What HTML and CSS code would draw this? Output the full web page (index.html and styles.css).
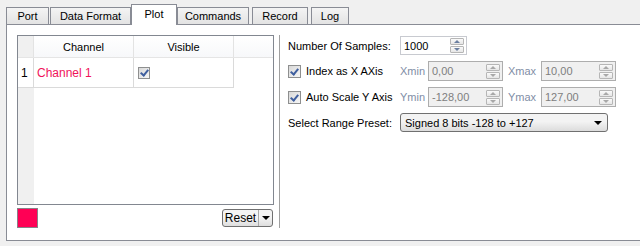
FILE: index.html
```html
<!DOCTYPE html>
<html lang="en">
<head>
    <meta charset="UTF-8">
    <title>Plot Settings</title>
    <link rel="stylesheet" href="styles.css">
</head>
<body>
    <div class="tabs">
        <div class="tab tab-port">Port</div>
        <div class="tab tab-format">Data Format</div>
        <div class="tab tab-plot active">Plot</div>
        <div class="tab tab-commands">Commands</div>
        <div class="tab tab-record">Record</div>
        <div class="tab tab-log">Log</div>
    </div>

    <div class="panel">
        <!-- Channel list -->
        <div class="left">
            <div class="grid">
                <div class="grid-head">
                    <div class="cell corner"></div>
                    <div class="cell head">Channel</div>
                    <div class="cell head">Visible</div>
                    <div class="cell head rest"></div>
                </div>
                <div class="grid-row">
                    <div class="cell num">1</div>
                    <div class="cell name">Channel 1</div>
                    <div class="cell vis"><span class="check small"></span></div>
                </div>
                <div class="grid-fill">
                    <div class="fill-num"></div>
                </div>
            </div>
            <div class="left-bottom">
                <div class="swatch"></div>
                <div class="reset">
                    <span class="reset-label">Reset</span>
                    <span class="reset-arrow"></span>
                </div>
            </div>
        </div>

        <div class="divider"></div>

        <!-- Plot options -->
        <div class="options">
            <div class="label">Number Of Samples:</div>
            <div class="spinbox samples">
                <span class="value">1000</span>
                <span class="spin"><i class="up"></i><i class="down"></i></span>
            </div>

            <label class="checkline"><span class="check"></span>Index as X AXis</label>
            <div class="dim">Xmin</div>
            <div class="spinbox off"><span class="value">0,00</span><span class="spin"><i class="up"></i><i class="down"></i></span></div>
            <div class="dim dim-max">Xmax</div>
            <div class="spinbox off"><span class="value">10,00</span><span class="spin"><i class="up"></i><i class="down"></i></span></div>

            <label class="checkline"><span class="check"></span>Auto Scale Y Axis</label>
            <div class="dim">Ymin</div>
            <div class="spinbox off"><span class="value">-128,00</span><span class="spin"><i class="up"></i><i class="down"></i></span></div>
            <div class="dim dim-max">Ymax</div>
            <div class="spinbox off"><span class="value">127,00</span><span class="spin"><i class="up"></i><i class="down"></i></span></div>

            <div class="label">Select Range Preset:</div>
            <div class="combo">
                <span>Signed 8 bits -128 to +127</span>
                <span class="combo-arrow"></span>
            </div>
        </div>
    </div>
</body>
</html>
```

FILE: styles.css
```css
* {
    margin: 0;
    padding: 0;
    box-sizing: border-box;
}

body {
    font-family: 'Liberation Sans', Arial, sans-serif;
    font-size: 11px;
    color: #000;
    background-color: #f0f0f0;
    width: 640px;
    height: 246px;
    overflow: hidden;
}

/* Tabs */
.tabs {
    display: flex;
    align-items: flex-end;
    height: 24px;
    padding-left: 6px;
}

.tab {
    height: 17px;
    display: flex;
    align-items: center;
    justify-content: center;
    border: 1px solid #898c95;
    border-bottom: none;
    background: linear-gradient(#f4f4f4, #e3e3e3);
    margin-right: 1px;
    padding-bottom: 1px;
}

.tab-port { width: 43px; }
.tab-format { width: 81px; }
.tab-commands { width: 72px; }
.tab-record { width: 56px; margin-left: 2px; }
.tab-log { width: 38px; margin-left: 2px; }

.tab.active {
    width: 46px;
    height: 21px;
    margin: 0 0 -1px -1px;
    background: #fff;
    position: relative;
    z-index: 1;
    padding-bottom: 3px;
}

/* Panel */
.panel {
    margin-left: 6px;
    height: 217px;
    background-color: #fff;
    border: 1px solid #898c95;
    border-right: none;
    display: flex;
    padding: 10px 0 0 10px;
}

.left {
    width: 257px;
    display: flex;
    flex-direction: column;
}

.grid {
    height: 170px;
    border: 1px solid #828790;
    display: flex;
    flex-direction: column;
}

.grid-head {
    display: flex;
    height: 22px;
    border-bottom: 1px solid #e5e5e5;
}

.cell {
    display: flex;
    align-items: center;
    border-right: 1px solid #e3e3e3;
}

.corner {
    width: 16px;
    background-color: #f0f0f0;
}

.head {
    width: 100px;
    justify-content: center;
    background: linear-gradient(#ffffff, #f7f8fa);
    padding-top: 1px;
}

.head.rest {
    flex: 1;
    border-right: none;
}

.grid-row {
    display: flex;
    height: 30px;
}

.grid-row .cell {
    border-bottom: 1px solid #dadada;
    border-right: 1px solid #dadada;
}

.num {
    width: 16px;
    padding-left: 3px;
    font-size: 12px;
}

.name {
    width: 100px;
    padding-left: 3px;
    color: #f0145a;
    font-size: 12px;
}

.vis {
    width: 100px;
    padding-left: 4px;
}

.grid-fill {
    flex: 1;
    display: flex;
}

.fill-num {
    width: 16px;
    background-color: #f0f0f0;
}

.left-bottom {
    display: flex;
    justify-content: space-between;
    align-items: flex-start;
    margin-top: 3px;
}

.swatch {
    width: 21px;
    height: 20px;
    background-color: #ff0055;
    border: 1px solid #8a7f88;
}

.reset {
    display: flex;
    height: 18px;
    margin-top: 1px;
    margin-right: 1px;
    border: 1px solid #707070;
    border-radius: 3px;
    background: linear-gradient(#f4f4f4 45%, #dedede);
}

.reset-label {
    width: 36px;
    display: flex;
    align-items: center;
    justify-content: center;
    border-right: 1px solid #a9a9a9;
    font-size: 12px;
}

.reset-arrow {
    width: 13px;
    position: relative;
}

.reset-arrow::after,
.combo-arrow::after {
    content: "";
    position: absolute;
    left: 50%;
    top: 50%;
    margin: -2px 0 0 -4px;
    border-left: 4px solid transparent;
    border-right: 4px solid transparent;
    border-top: 4px solid #000;
}

.divider {
    width: 1px;
    height: 193px;
    margin-left: 5px;
    background-color: #a0a0a0;
}

/* Options */
.options {
    margin-left: 8px;
    padding-top: 1px;
    display: grid;
    grid-template-columns: 112px 28px 75px 38px 75px;
    grid-template-rows: 19px 20px 20px 19px;
    row-gap: 6px;
    align-items: center;
    align-content: start;
    white-space: nowrap;
}

.label,
.checkline {
    grid-column: 1;
}

.checkline {
    display: flex;
    align-items: center;
    gap: 5px;
}

.check {
    width: 13px;
    height: 13px;
    border: 1px solid #8e8f8f;
    background: linear-gradient(135deg, #d8d8d8, #f6f6f6);
    position: relative;
    display: inline-block;
    flex: none;
}

.check::after {
    content: "";
    position: absolute;
    left: 3px;
    top: 1px;
    width: 3px;
    height: 6px;
    border-right: 2px solid #3f5f9f;
    border-bottom: 2px solid #3f5f9f;
    transform: rotate(40deg);
}

.check.small {
    width: 12px;
    height: 12px;
}

.check.small::after {
    left: 3px;
    top: 0px;
}

.dim {
    color: #7f8ea6;
}

.dim-max {
    padding-left: 5px;
}

.spinbox {
    height: 100%;
    display: flex;
    align-items: center;
    justify-content: space-between;
    border: 1px solid #abadb3;
    padding: 0 2px 0 3px;
    background-color: #fff;
}

.spinbox.samples {
    grid-column: 2 / 4;
    width: 67px;
    height: 19px;
    border-color: #c8cad0;
}

.spinbox.off {
    background-color: #f0f0f0;
    color: #7e7e7e;
    border-color: #adadad;
    width: 75px;
}

.spin {
    display: flex;
    flex-direction: column;
    gap: 1px;
}

.spin i {
    width: 14px;
    height: 7px;
    border: 1px solid #b6b6b6;
    background: linear-gradient(#fafafa, #e6e6e6);
    position: relative;
    border-radius: 1px;
}

.spin i::after {
    content: "";
    position: absolute;
    left: 3px;
    top: 1px;
    border-left: 3px solid transparent;
    border-right: 3px solid transparent;
}

.spin .up::after {
    border-bottom: 3px solid #6b7fa0;
}

.spin .down::after {
    border-top: 3px solid #6b7fa0;
}

.off .spin .up::after {
    border-bottom-color: #a8a8a8;
}

.off .spin .down::after {
    border-top-color: #a8a8a8;
}

.combo {
    grid-column: 2 / 6;
    width: 208px;
    height: 19px;
    display: flex;
    align-items: center;
    justify-content: space-between;
    padding-left: 4px;
    border: 1px solid #707070;
    border-radius: 3px;
    background: linear-gradient(#f3f3f3 45%, #dcdcdc);
}

.combo-arrow {
    width: 18px;
    height: 100%;
    position: relative;
}
```
